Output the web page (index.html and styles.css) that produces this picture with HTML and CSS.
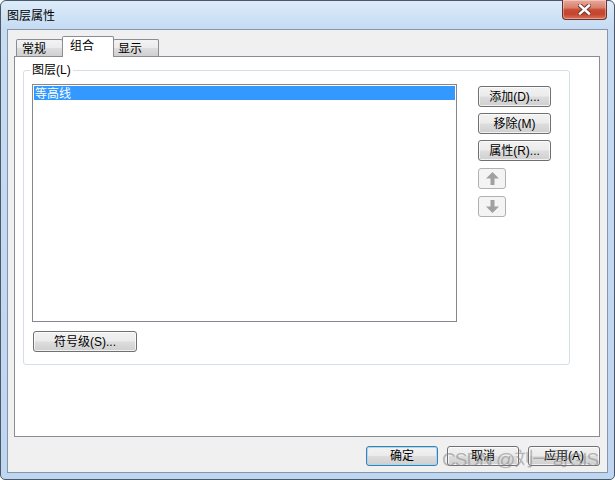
FILE: index.html
```html
<!DOCTYPE html>
<html lang="zh-CN">
<head>
<meta charset="utf-8">
<title>图层属性</title>
<link rel="stylesheet" href="styles.css">
</head>
<body>
<div class="window">
  <div class="titlebar">
    <div class="title">图层属性</div>
    <div class="close">
      <svg width="13" height="11" viewBox="0 0 13 11">
        <path d="M2 1.5 L11 9.5 M11 1.5 L2 9.5" stroke="#6e3b33" stroke-width="4.4" stroke-linecap="square"/>
        <path d="M2 1.5 L11 9.5 M11 1.5 L2 9.5" stroke="#ffffff" stroke-width="2.4" stroke-linecap="square"/>
      </svg>
    </div>
  </div>
  <div class="client">
    <div class="tabstrip">
      <div class="tab tab-first">常规</div>
      <div class="tab tab-active">组合</div>
      <div class="tab tab-last">显示</div>
    </div>
    <div class="panel">
      <div class="groupbox">
        <div class="legend">图层(L)</div>
        <div class="group-body">
          <div class="listbox">
            <div class="list-item selected">等高线</div>
          </div>
          <div class="side-buttons">
            <div class="btn btn-side">添加(D)...</div>
            <div class="btn btn-side">移除(M)</div>
            <div class="btn btn-side">属性(R)...</div>
            <div class="btn btn-arrow">
              <svg width="13" height="13" viewBox="0 0 13 13"><path d="M6.5 0 L13 6.5 H8.5 V13 H4.5 V6.5 H0 Z" fill="#a0a0a0"/></svg>
            </div>
            <div class="btn btn-arrow">
              <svg width="13" height="13" viewBox="0 0 13 13"><path d="M6.5 13 L13 6.5 H8.5 V0 H4.5 V6.5 H0 Z" fill="#a0a0a0"/></svg>
            </div>
          </div>
        </div>
        <div class="btn btn-symbol">符号级(S)...</div>
      </div>
    </div>
    <div class="dialog-buttons">
      <div class="btn btn-dialog btn-default">确定</div>
      <div class="btn btn-dialog">取消</div>
      <div class="btn btn-dialog">应用(A)</div>
    </div>
  </div>
  <div class="watermark">CSDN @刘一哥GIS</div>
</div>
</body>
</html>
```
FILE: styles.css
```css
* { box-sizing: border-box; }
html, body { margin: 0; padding: 0; }
body {
  width: 615px;
  height: 480px;
  overflow: hidden;
  background: #ffffff;
  font-family: "Liberation Sans", "Noto Sans CJK SC", sans-serif;
  font-size: 12px;
  color: #000;
}
.window {
  position: relative;
  width: 615px;
  height: 480px;
  border: 1px solid #4a5868;
  border-radius: 6px 6px 5px 5px;
  background: linear-gradient(180deg, #dcebf9 0px, #c6dcf3 27px, #bed6f0 100%);
  display: flex;
  flex-direction: column;
}
.titlebar {
  flex: none;
  height: 28px;
  display: flex;
  justify-content: space-between;
  padding: 0 7px 0 6px;
}
.title {
  padding-top: 6px;
  line-height: 16px;
  font-size: 12px;
  font-family: "Noto Sans CJK SC", sans-serif;
}
.close {
  width: 45px;
  height: 20px;
  margin-top: -1px;
  border: 1px solid #6b3128;
  border-top: none;
  border-radius: 0 0 4px 4px;
  background: linear-gradient(180deg, #e9a99c 0%, #d9816f 40%, #c74a33 52%, #c5452e 75%, #d8735a 100%);
  box-shadow: inset 0 0 0 1px rgba(255,255,255,0.35);
  display: flex;
  align-items: center;
  justify-content: center;
}
.close svg { display: block; }
.client {
  flex: 1;
  margin: 0 6px 6px 6px;
  border: 1px solid #8596ab;
  background: #f0f0f0;
  display: flex;
  flex-direction: column;
  padding: 6px 7px 0 6px;
}
.tabstrip {
  flex: none;
  height: 20px;
  display: flex;
  align-items: flex-end;
  padding-left: 2px;
}
.tab {
  height: 17px;
  border: 1px solid #898c95;
  border-bottom: none;
  border-radius: 2px 2px 0 0;
  background: linear-gradient(180deg, #f3f3f3 0%, #ebebeb 50%, #dddddd 51%, #d0d0d0 100%);
  line-height: 14px;
  padding-top: 1px;
  font-family: "Noto Sans CJK SC", sans-serif;
}
.tab-first { width: 47px; padding-left: 5px; }
.tab-active {
  position: relative;
  z-index: 1;
  width: 52px;
  height: 21px;
  margin-left: -1px;
  margin-bottom: -1px;
  background: #ffffff;
  padding-left: 7px;
}
.tab-last { width: 46px; margin-left: -1px; padding-left: 4px; }
.panel {
  flex: 1;
  border: 1px solid #898c95;
  background: #ffffff;
  padding: 13px 0 0 8px;
}
.groupbox {
  position: relative;
  width: 547px;
  height: 295px;
  border: 1px solid #d5dfe5;
  border-radius: 3px;
  padding: 13px 0 0 8px;
}
.legend {
  position: absolute;
  top: -8px;
  left: 6px;
  padding: 0 2px;
  background: #ffffff;
  line-height: 14px;
}
.group-body {
  display: flex;
  gap: 21px;
}
.listbox {
  width: 425px;
  height: 238px;
  border: 1px solid #828790;
  background: #ffffff;
  padding: 1px;
}
.list-item {
  height: 14px;
  line-height: 14px;
  padding-left: 1px;
  font-family: "Noto Sans CJK SC", sans-serif;
}
.list-item.selected { background: #3399ff; color: #ffffff; }
.side-buttons {
  display: flex;
  flex-direction: column;
  gap: 6px;
  margin-top: 2px;
}
.btn {
  display: flex;
  align-items: center;
  justify-content: center;
  border: 1px solid #707070;
  border-radius: 3px;
  background: linear-gradient(180deg, #f2f2f2 0%, #ebebeb 48%, #dddddd 52%, #cfcfcf 100%);
  box-shadow: inset 0 0 0 1px rgba(255,255,255,0.7);
  line-height: 14px;
  white-space: nowrap;
}
.btn-side { width: 73px; height: 21px; }
.btn-arrow {
  width: 28px;
  height: 21px;
  margin-top: 1px;
  border-color: #adb2b5;
  background: #f4f4f4;
  box-shadow: none;
}
.btn-arrow svg { display: block; }
.btn-symbol {
  width: 104px;
  height: 21px;
  margin-top: 9px;
  margin-left: 1px;
}
.dialog-buttons {
  flex: none;
  display: flex;
  justify-content: flex-end;
  gap: 9px;
  margin-top: 9px;
  margin-bottom: 6px;
}
.btn-dialog { width: 72px; height: 20px; }
.btn-default {
  border-color: #3c7fb1;
  box-shadow: inset 0 0 0 1px #a8d8f2;
}
.watermark {
  position: absolute;
  left: 441px;
  top: 448px;
  font-family: "Liberation Sans", "Noto Sans CJK SC", sans-serif;
  font-size: 19px;
  letter-spacing: -1px;
  line-height: 22px;
  color: rgba(130, 130, 130, 0.55);
  pointer-events: none;
  white-space: nowrap;
}
```
